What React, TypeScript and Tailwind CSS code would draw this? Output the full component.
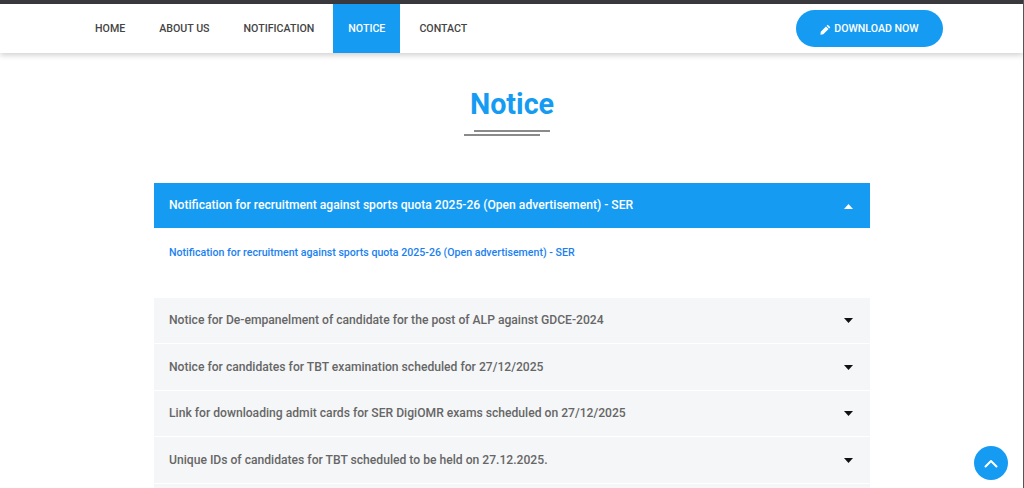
import React from "react";

const items = [
  "Notice for De-empanelment of candidate for the post of ALP against GDCE-2024",
  "Notice for candidates for TBT examination scheduled for 27/12/2025",
  "Link for downloading admit cards for SER DigiOMR exams scheduled on 27/12/2025",
  "Unique IDs of candidates for TBT scheduled to be held on 27.12.2025.",
  "",
];

function Caret({ up, color }: { up?: boolean; color: string }) {
  return (
    <svg width="9" height="5" viewBox="0 0 9 5" className={up ? "mt-[2px] block" : "mt-px block"}>
      <path d={up ? "M4.5 0 L9 5 L0 5 Z" : "M0 0 L9 0 L4.5 5 Z"} fill={color} />
    </svg>
  );
}

export default function App() {
  return (
    <div className="relative h-[488px] w-[1024px] overflow-hidden border-r border-[#555] bg-white font-['Roboto',sans-serif]">
      <div className="h-1 bg-[#3a3a3f]" />
      <header className="relative z-10 flex h-[49px] items-center justify-between pl-[80px] pr-[80px] shadow-[0_2px_6px_rgba(0,0,0,0.2)]">
        <nav className="flex h-full gap-1 text-[10.65px] font-medium leading-[49px] text-[#444]">
          <a className="px-[15px]">HOME</a>
          <a className="px-[15px]">ABOUT US</a>
          <a className="px-[15px]">NOTIFICATION</a>
          <a className="bg-[#169bf3] px-[15px] text-white">NOTICE</a>
          <a className="px-[15px]">CONTACT</a>
        </nav>
        <a className="flex h-[37px] w-[147px] items-center justify-center gap-[3px] rounded-full bg-[#169bf3] pt-px text-[10.6px] font-medium text-white">
          <svg width="11" height="11" viewBox="0 0 10 10">
            <path d="M7 .6 9.400 3 8.400 4 6 1.600ZM5.400 2.200 7.800 4.600 3 9.400.4 9.800.7 7Z" fill="#fff" />
          </svg>
          DOWNLOAD NOW
        </a>
      </header>

      <main className="flex flex-col items-center pl-px">
        <h1 className="mt-[33px] text-[28.7px] font-bold leading-9 text-[#169bf3]">Notice</h1>
        <div className="mt-[8px] flex w-[96px] flex-col">
          <div className="ml-[10px] h-[2px] w-[76px] bg-[#8a8a8a]" />
          <div className="mt-[2px] h-[2px] w-[76px] bg-[#8a8a8a]" />
        </div>

        <section className="mt-[47px] w-[716px]">
          <div className="flex h-[45px] items-center justify-between bg-[#169bf3] pl-[15px] pr-[17px] text-[12.13px] font-medium text-white">
            <span>Notification for recruitment against sports quota 2025-26 (Open advertisement) - SER</span>
            <Caret up color="#fff" />
          </div>
          <div className="h-[69.5px] pl-[15px] pt-[17px] text-[10.6px] font-medium leading-4 text-[#1a7ff0]">
            Notification for recruitment against sports quota 2025-26 (Open advertisement) - SER
          </div>
          <div className="flex flex-col gap-px">
            {items.map((t, i) => (
              <div
                key={i}
                className="flex h-[45.5px] items-center justify-between bg-[#f5f6f8] pl-[15px] pr-[17px] text-[12.13px] font-medium text-[#666]"
              >
                <span>{t}</span>
                {t && <Caret color="#111" />}
              </div>
            ))}
          </div>
        </section>
      </main>

      <a className="absolute left-[974px] top-[446px] z-20 flex h-[34px] w-[34px] items-center justify-center rounded-full bg-[#169bf3]">
        <svg width="14" height="9" viewBox="0 0 14 9" fill="none" stroke="#fff" strokeWidth="2" strokeLinecap="round" strokeLinejoin="round">
          <path d="M1.500 7.500 7 2l5.500 5.500" />
        </svg>
      </a>
    </div>
  );
}
